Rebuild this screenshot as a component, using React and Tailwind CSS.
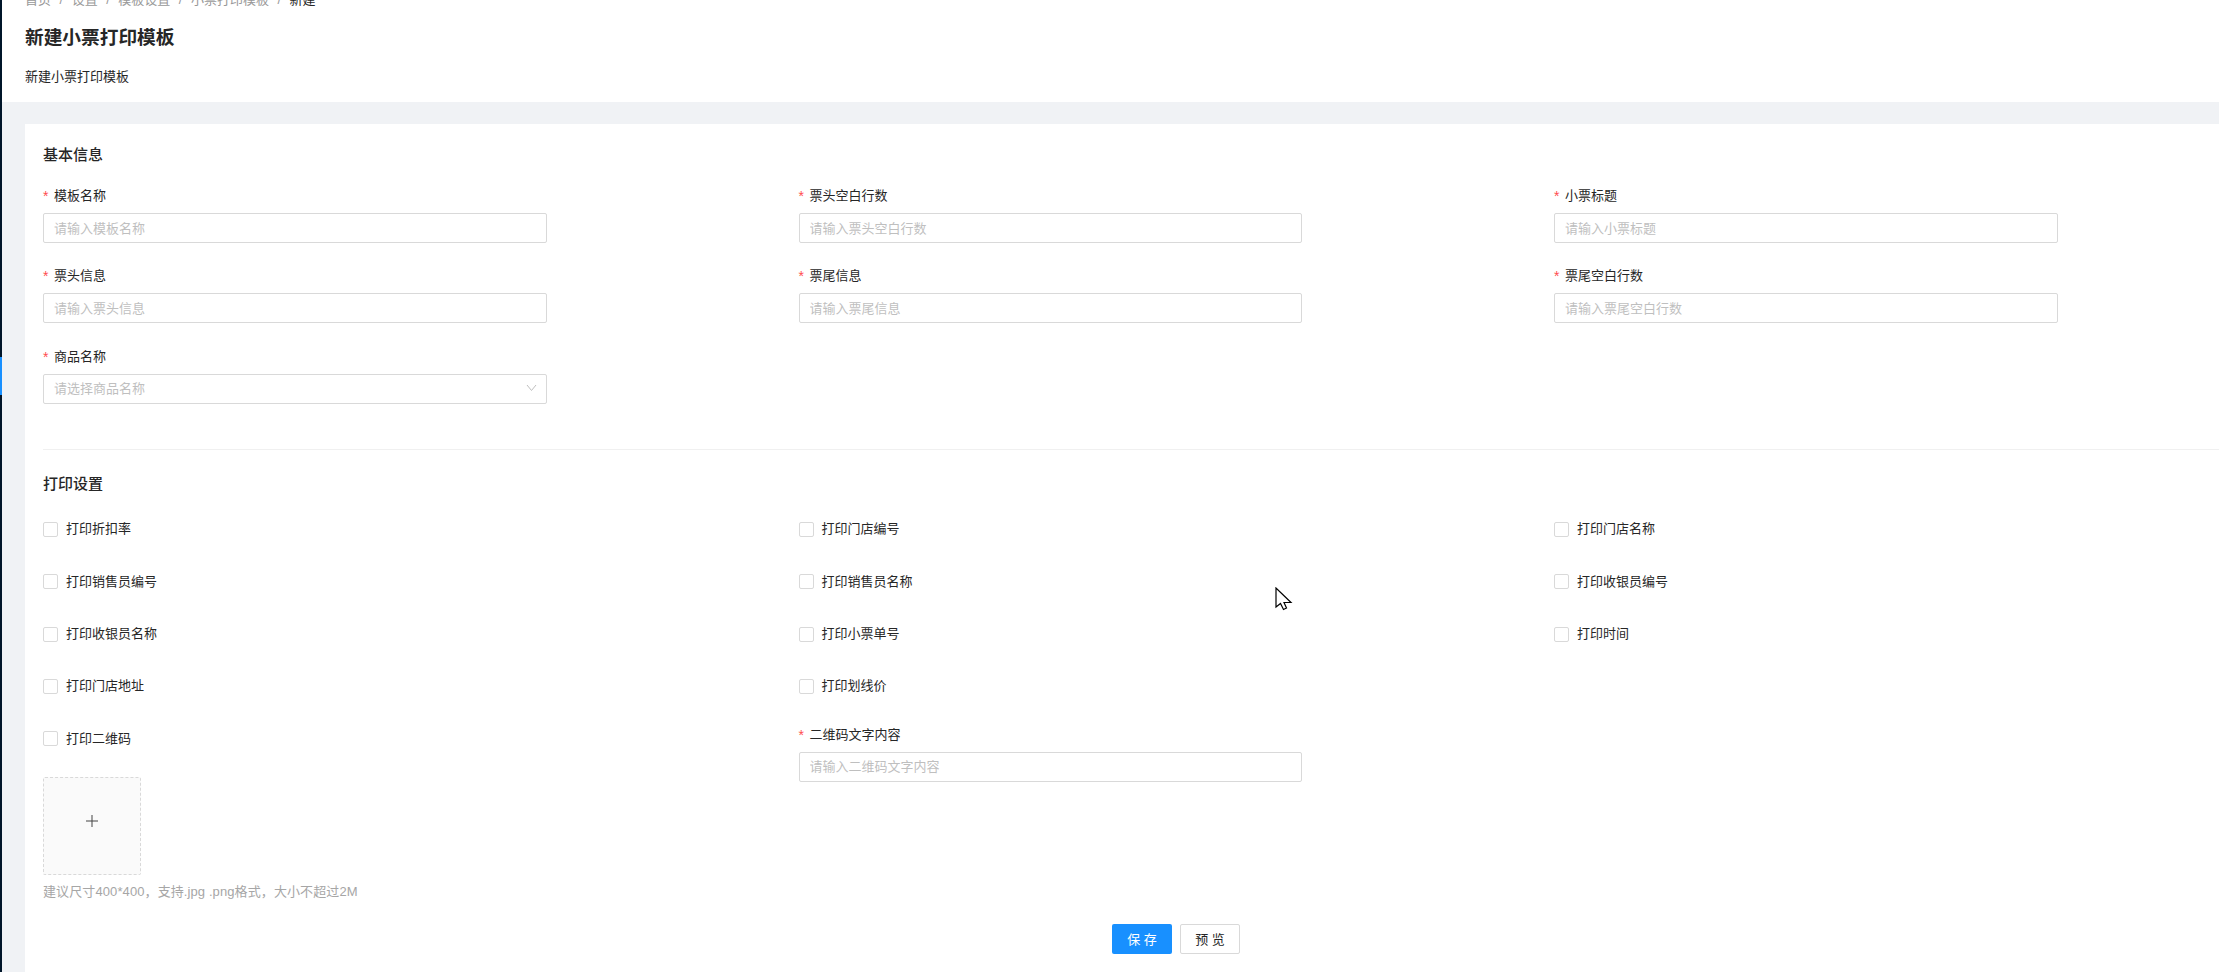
import React from "react";

function Label({ children }) {
  return (
    <div className="flex h-5 items-center text-[13px] leading-5 text-[#262626]">
      <span className="w-[11px] shrink-0 text-[14px] leading-5 text-[#ff4d4f]">*</span>
      <span>{children}</span>
    </div>
  );
}

function Field({ label, placeholder }) {
  return (
    <div className="flex w-[503.5px] flex-col gap-[7px]">
      <Label>{label}</Label>
      <input
        readOnly
        placeholder={placeholder}
        className="h-[30px] w-full rounded-[2px] border border-[#d9d9d9] bg-white px-[10px] text-[13px] outline-none placeholder:text-[#bfbfbf]"
      />
    </div>
  );
}

function SelectField({ label, placeholder }) {
  return (
    <div className="flex w-[503.5px] flex-col gap-[7px]">
      <Label>{label}</Label>
      <div className="flex h-[30px] w-full items-center justify-between rounded-[2px] border border-[#d9d9d9] bg-white pl-[10px] pr-[9px] text-[13px] text-[#bfbfbf]">
        <span>{placeholder}</span>
        <svg width="11" height="8" viewBox="0 0 11 8" fill="none" className="mb-[2px]">
          <path d="M1 1l4.5 5.5L10 1" stroke="#bfbfbf" strokeWidth="1" />
        </svg>
      </div>
    </div>
  );
}

function Check({ children }) {
  return (
    <label className="flex h-5 items-center gap-2 text-[13px] leading-5 text-[#262626]">
      <span className="h-[15px] w-[15px] shrink-0 rounded-[2px] border border-[#d9d9d9] bg-white" />
      <span>{children}</span>
    </label>
  );
}

function Crumb({ children, last }) {
  return (
    <>
      <span className={last ? "text-[#262626]" : "text-[#999999]"}>{children}</span>
      {!last && <span className="mx-[8.5px] text-[#999999]">/</span>}
    </>
  );
}

export default function App() {
  return (
    <div
      className="flex h-[972px] w-[2219px] overflow-hidden bg-[#f0f2f5]"
      style={{ fontFamily: '"Liberation Sans","Noto Sans CJK SC",sans-serif' }}
    >
      <aside className="flex w-[2px] shrink-0 flex-col bg-[#001529]">
        <div className="mt-[357px] h-[38px] bg-[#1890ff]" />
      </aside>
      <main className="relative flex min-w-0 flex-1 flex-col">
        <header className="bg-white pb-[15px] pl-[23px]">
          <nav className="-mt-[10px] flex h-5 items-center text-[13px] leading-5">
            <Crumb>首页</Crumb>
            <Crumb>设置</Crumb>
            <Crumb>模板设置</Crumb>
            <Crumb>小票打印模板</Crumb>
            <Crumb last>新建</Crumb>
          </nav>
          <h1 className="mt-[14px] text-[18.7px] font-bold leading-7 text-[#262626]">新建小票打印模板</h1>
          <p className="mt-[15px] text-[13px] leading-5 text-[#262626]">新建小票打印模板</p>
        </header>

        <section className="ml-[23px] mt-[22px] flex-1 bg-white pl-[18px] pt-[21px]">
          <h2 className="text-[15px] font-medium leading-5 text-[#262626]">基本信息</h2>
          <div className="mt-[21px] grid grid-cols-[755.5px_755.5px_1fr] gap-y-[23.4px]">
            <Field label="模板名称" placeholder="请输入模板名称" />
            <Field label="票头空白行数" placeholder="请输入票头空白行数" />
            <Field label="小票标题" placeholder="请输入小票标题" />
            <Field label="票头信息" placeholder="请输入票头信息" />
            <Field label="票尾信息" placeholder="请输入票尾信息" />
            <Field label="票尾空白行数" placeholder="请输入票尾空白行数" />
            <SelectField label="商品名称" placeholder="请选择商品名称" />
          </div>

          <div className="mt-[45px] h-px bg-[#f0f0f0]" />

          <h2 className="mt-6 text-[15px] font-medium leading-5 text-[#262626]">打印设置</h2>
          <div className="mt-[25.5px] grid grid-cols-[755.5px_755.5px_1fr] gap-y-[32.4px]">
            <Check>打印折扣率</Check>
            <Check>打印门店编号</Check>
            <Check>打印门店名称</Check>
            <Check>打印销售员编号</Check>
            <Check>打印销售员名称</Check>
            <Check>打印收银员编号</Check>
            <Check>打印收银员名称</Check>
            <Check>打印小票单号</Check>
            <Check>打印时间</Check>
            <Check>打印门店地址</Check>
            <Check>打印划线价</Check>
          </div>

          <div className="mt-[28.5px] grid grid-cols-[755.5px_755.5px_1fr]">
            <div className="pt-[4px]">
              <Check>打印二维码</Check>
              <div className="mt-[28px] flex h-[98px] w-[98px] items-center justify-center rounded-[2px] border border-dashed border-[#d9d9d9] bg-[#fafafa]">
                <svg width="12" height="12" viewBox="0 0 12 12" fill="none" className="mb-[9px]">
                  <path d="M6 0v12M0 6h12" stroke="#434343" strokeWidth="1" />
                </svg>
              </div>
              <p className="mt-[7.5px] whitespace-nowrap text-[13px] leading-5 tracking-[0.1px] text-[#a6a6a6]">
                建议尺寸400*400，支持.jpg .png格式，大小不超过2M
              </p>
            </div>
            <Field label="二维码文字内容" placeholder="请输入二维码文字内容" />
          </div>

          <div className="ml-[1069px] mt-[22px] flex gap-2">
            <button className="h-[30px] w-[60px] rounded-[2px] bg-[#1890ff] text-[13px] text-white">保 存</button>
            <button className="h-[30px] w-[60px] rounded-[2px] border border-[#d9d9d9] bg-white text-[13px] text-[#262626]">预 览</button>
          </div>
        </section>

        <svg
          className="absolute left-[1273px] top-[587px]"
          width="18"
          height="24"
          viewBox="0 0 18 24"
          fill="none"
        >
          <path
            d="M1 1v19l4.5-3.5 3 6 3-1.5-2.5-5.5H16z"
            fill="#fff"
            stroke="#000"
            strokeWidth="1.2"
          />
        </svg>
      </main>
    </div>
  );
}
